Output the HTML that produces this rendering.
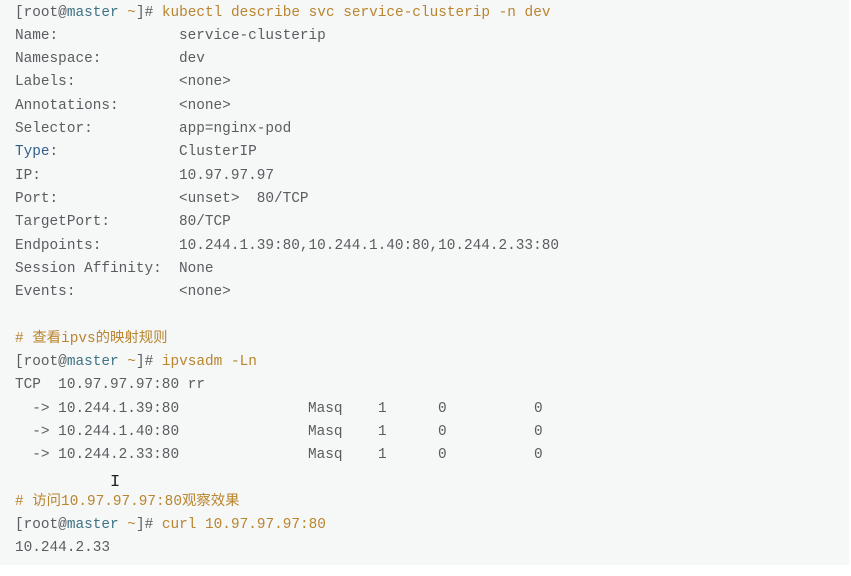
<!DOCTYPE html>
<html><head><meta charset="utf-8"><style>
html,body{margin:0;padding:0;background:#fff;width:851px;height:576px;overflow:hidden}
.bg{position:absolute;left:0;top:0;width:849px;height:565px;background:#f6f7f7}
.w{position:absolute;left:0;top:1px;width:851px;height:570px}
.l{position:absolute;left:15px;height:23.3px;line-height:23.3px;font-family:"Liberation Mono","Noto Sans CJK SC",monospace;font-size:14.4px;color:#5a5d60;white-space:pre}
.v{position:absolute;left:164px}
.o{color:#b9852e}.t{color:#3f7384}.b{color:#2f5f8a}
.c{position:absolute;font-family:"Liberation Mono",monospace;font-size:17px;color:#222}
</style></head><body><div class="bg"></div><div class="w">
<div class="l" style="top:0.5px">[root@<span class="t">master</span> <span class="o">~</span>]# <span class="o">kubectl describe svc service-clusterip -n dev</span></div>
<div class="l" style="top:23.8px">Name:<span class="v">service-clusterip</span></div>
<div class="l" style="top:47.1px">Namespace:<span class="v">dev</span></div>
<div class="l" style="top:70.4px">Labels:<span class="v">&lt;none&gt;</span></div>
<div class="l" style="top:93.7px">Annotations:<span class="v">&lt;none&gt;</span></div>
<div class="l" style="top:117px">Selector:<span class="v">app=nginx-pod</span></div>
<div class="l" style="top:140.3px"><span class="b">Type</span>:<span class="v">ClusterIP</span></div>
<div class="l" style="top:163.6px">IP:<span class="v">10.97.97.97</span></div>
<div class="l" style="top:186.9px">Port:<span class="v">&lt;unset&gt;  80/TCP</span></div>
<div class="l" style="top:210.2px">TargetPort:<span class="v">80/TCP</span></div>
<div class="l" style="top:233.5px">Endpoints:<span class="v">10.244.1.39:80,10.244.1.40:80,10.244.2.33:80</span></div>
<div class="l" style="top:256.8px">Session Affinity:<span class="v">None</span></div>
<div class="l" style="top:280.1px">Events:<span class="v">&lt;none&gt;</span></div>
<div class="l o" style="top:326.7px"># 查看ipvs的映射规则</div>
<div class="l" style="top:350px">[root@<span class="t">master</span> <span class="o">~</span>]# <span class="o">ipvsadm -Ln</span></div>
<div class="l" style="top:373.3px">TCP  10.97.97.97:80 rr</div>
<div class="l" style="top:396.6px">  -&gt; 10.244.1.39:80<span class="v" style="left:293px">Masq</span><span class="v" style="left:363px">1</span><span class="v" style="left:423px">0</span><span class="v" style="left:519px">0</span></div>
<div class="l" style="top:419.9px">  -&gt; 10.244.1.40:80<span class="v" style="left:293px">Masq</span><span class="v" style="left:363px">1</span><span class="v" style="left:423px">0</span><span class="v" style="left:519px">0</span></div>
<div class="l" style="top:443.2px">  -&gt; 10.244.2.33:80<span class="v" style="left:293px">Masq</span><span class="v" style="left:363px">1</span><span class="v" style="left:423px">0</span><span class="v" style="left:519px">0</span></div>
<div class="l o" style="top:489.8px"># 访问10.97.97.97:80观察效果</div>
<div class="l" style="top:513.1px">[root@<span class="t">master</span> <span class="o">~</span>]# <span class="o">curl 10.97.97.97:80</span></div>
<div class="l" style="top:536.4px">10.244.2.33</div>
<div class="c" style="left:110px;top:472px">I</div>
</div>
</body></html>
